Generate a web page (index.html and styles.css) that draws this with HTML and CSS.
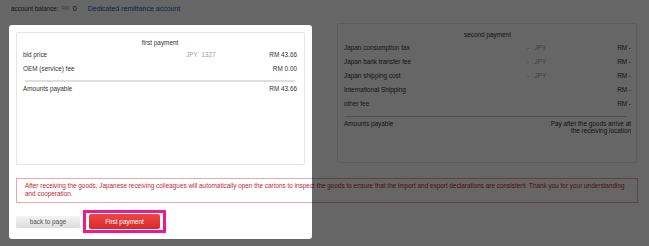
FILE: index.html
```html
<!DOCTYPE html>
<html lang="en">
<head>
    <meta charset="UTF-8">
    <meta name="viewport" content="width=device-width, initial-scale=1.0">
    <title>Payment</title>
    <link rel="stylesheet" href="styles.css">
</head>
<body>
    <div class="topbar">
        <span class="balance-label">account balance:</span>
        <span class="balance-unit">RM</span>
        <span class="balance-value">0</span>
        <a class="remit-link" href="#">Dedicated remittance account</a>
    </div>

    <div class="columns">
        <div class="pay-box first">
            <div class="pay-title">first payment</div>
            <div class="pay-row">
                <span>bid price</span>
                <span class="pay-jpy">JPY&nbsp;&nbsp;1327</span>
                <span class="pay-rm">RM 43.66</span>
            </div>
            <div class="pay-row">
                <span>OEM (service) fee</span>
                <span class="pay-jpy"></span>
                <span class="pay-rm">RM 0.00</span>
            </div>
            <div class="pay-line"></div>
            <div class="pay-row">
                <span>Amounts payable</span>
                <span class="pay-jpy"></span>
                <span class="pay-rm">RM 43.66</span>
            </div>
        </div>

        <div class="pay-box second">
            <div class="pay-title">second payment</div>
            <div class="pay-row">
                <span>Japan consumption tax</span>
                <span class="pay-jpy">-&nbsp;&nbsp;&nbsp;JPY</span>
                <span class="pay-rm">RM -</span>
            </div>
            <div class="pay-row">
                <span>Japan bank transfer fee</span>
                <span class="pay-jpy">-&nbsp;&nbsp;&nbsp;JPY</span>
                <span class="pay-rm">RM -</span>
            </div>
            <div class="pay-row">
                <span>Japan shipping cost</span>
                <span class="pay-jpy">-&nbsp;&nbsp;&nbsp;JPY</span>
                <span class="pay-rm">RM -</span>
            </div>
            <div class="pay-row">
                <span>International Shipping</span>
                <span class="pay-jpy"></span>
                <span class="pay-rm">RM -</span>
            </div>
            <div class="pay-row">
                <span>other fee</span>
                <span class="pay-jpy"></span>
                <span class="pay-rm">RM -</span>
            </div>
            <div class="pay-line"></div>
            <div class="pay-total">
                <span>Amounts payable</span>
                <span class="pay-note">Pay after the goods arrive at<br>the receiving location</span>
            </div>
        </div>
    </div>

    <div class="notice">
        After receiving the goods, Japanese receiving colleagues will automatically open the cartons to inspect the goods to ensure that the import and export declarations are consistent. Thank you for your understanding and cooperation.
    </div>

    <div class="actions">
        <button class="btn btn-back">back to page</button>
        <div class="pay-highlight">
            <button class="btn btn-pay">First payment</button>
        </div>
    </div>

    <div class="spotlight"></div>
</body>
</html>
```

FILE: styles.css
```css
* {
    margin: 0;
    padding: 0;
    box-sizing: border-box;
}

body {
    font-family: 'Liberation Sans', Arial, sans-serif;
    font-size: 6.4px;
    color: #333;
    background: #fff;
    width: 649px;
    height: 246px;
    overflow: hidden;
    position: relative;
}

.topbar {
    height: 16px;
    padding-left: 11px;
    display: flex;
    align-items: center;
    white-space: nowrap;
}

.balance-label {
    font-size: 6.3px;
    color: #333;
}

.balance-unit {
    font-size: 4.6px;
    color: #999;
    margin-left: 3px;
}

.balance-value {
    font-size: 7px;
    color: #222;
    margin-left: 4px;
}

.remit-link {
    font-size: 7px;
    color: #2a57a6;
    text-decoration: none;
    margin-left: 11px;
}

.columns {
    display: flex;
    align-items: flex-start;
    padding-left: 16px;
}

.pay-box {
    border: 1px solid #e6e6e6;
    border-radius: 2px;
    background: #fff;
}

.pay-box.first {
    width: 289px;
    height: 133px;
    margin-top: 16px;
    padding: 5px 7px 0 6px;
}

.pay-box.second {
    width: 300px;
    height: 140px;
    margin-top: 7px;
    margin-left: 32px;
    padding: 5px 5px 0 6px;
}

.pay-title {
    text-align: center;
    line-height: 10px;
}

.second .pay-title {
    line-height: 12px;
}

.pay-row {
    display: grid;
    grid-template-columns: 163px 50px 1fr;
    line-height: 14px;
    white-space: nowrap;
}

.second .pay-row {
    grid-template-columns: 183px 40px 1fr;
}

.pay-jpy {
    color: #a0a0a0;
}

.pay-rm {
    text-align: right;
}

.pay-line {
    margin: 4px 2px 0;
    border-top: 2px solid #dedede;
}

.second .pay-line {
    margin: 5px 4px 0 1px;
    border-top: 1px solid #c8c8c8;
}

.pay-total {
    display: flex;
    justify-content: space-between;
    line-height: 7px;
    margin-top: 3px;
}

.pay-note {
    text-align: right;
}

.notice {
    margin: 13px 0 0 16px;
    width: 622px;
    border: 1px solid #e9a7b0;
    padding: 3px 7px 4px 8px;
    color: #c4243a;
    line-height: 8px;
}

.actions {
    display: flex;
    align-items: center;
    gap: 3px;
    margin: 7px 0 0 16px;
}

.btn {
    font-family: inherit;
    font-size: 6.4px;
    border: none;
    border-radius: 2px;
    cursor: pointer;
}

.btn-back {
    width: 64px;
    height: 12px;
    color: #555;
    background: linear-gradient(#f4f4f4, #dcdcdc);
}

.pay-highlight {
    border: 3px solid #f0198c;
    padding: 1px 3px;
    background: #fff;
}

.btn-pay {
    display: block;
    width: 71px;
    height: 15px;
    color: #fff;
    background: linear-gradient(#ec4646, #d92a2a);
}

.spotlight {
    position: absolute;
    left: 9px;
    top: 25px;
    width: 303px;
    height: 214px;
    border-radius: 3px;
    box-shadow: 0 0 0 1200px rgba(0, 0, 0, 0.6);
    pointer-events: none;
}
```
